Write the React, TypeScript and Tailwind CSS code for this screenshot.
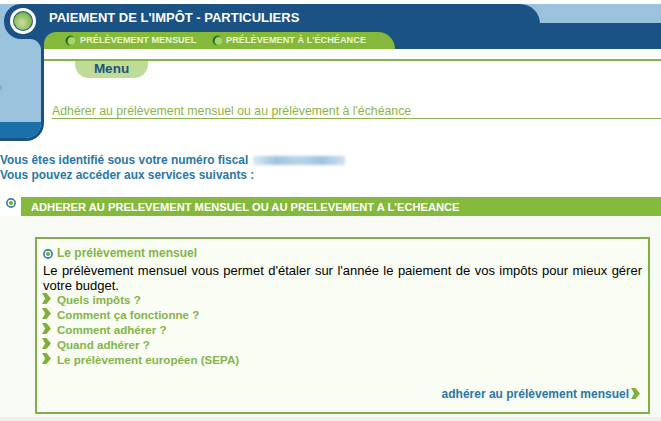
const LINKS = ["Quels impôts ?", "Comment ça fonctionne ?", "Comment adhérer ?", "Quand adhérer ?", "Le prélèvement européen (SEPA)"];

function Chevron({ className }: { className: string }) {
  return (
    <svg viewBox="0 0 9 11" className={className}>
      <path d="M0 0 L4.5 0 L9 5.5 L4.5 11 L0 11 L3.2 5.5 Z" fill="#7fb03c" />
    </svg>
  );
}

function Target() {
  return (
    <svg viewBox="0 0 10 10" className="w-[10px] h-[10px] shrink-0">
      <circle cx="5" cy="5" r="4.1" fill="#ffffff" stroke="#2f7fa5" strokeWidth="1.6" />
      <circle cx="5" cy="5" r="2" fill="#74a83c" />
    </svg>
  );
}

function TabDot() {
  return (
    <svg viewBox="0 0 11 11" className="w-[11px] h-[11px] shrink-0">
      <path d="M9 1.8 A5 5 0 1 0 5.5 10.5 A4 4 0 0 1 9 1.8 Z" fill="#1f6a22" />
      <circle cx="6.6" cy="6" r="3.6" fill="#a9d46a" />
    </svg>
  );
}

export default function App() {
  return (
    <div className="w-[661px] h-[421px] overflow-hidden bg-white font-['Liberation_Sans',Arial,sans-serif]">
      <div className="pt-[4px] flex h-[141px]">
        <div className="w-[44px] flex flex-col shrink-0">
          <div className="h-[35px] bg-[#9bc2dd] pl-[4px] shrink-0">
            <div className="h-[35px] bg-[#1b5285] rounded-l-[17px] flex items-center pl-[6px] pb-[1px]">
              <div className="w-[26px] h-[26px] rounded-full bg-white flex items-center justify-center">
                <div className="w-[20px] h-[20px] rounded-full bg-[#1b5285] flex items-center justify-center">
                  <div className="w-[18px] h-[18px] rounded-full bg-[radial-gradient(circle_at_45%_60%,#cfdcae,#86bd4e_60%,#3f8f2f)]" />
                </div>
              </div>
            </div>
          </div>
          <div className="flex-1 bg-[#1b5285] rounded-br-[18px] pr-[3px] pb-[3px]">
            <div className="h-full bg-[#9bc2dd] rounded-tr-[11px] rounded-br-[15px] overflow-hidden flex flex-col">
              <div className="w-[2px] h-[5px] mt-[46px] bg-[#7fb0d0]" />
              <div className="flex-1" />
              <div className="h-[16px] bg-[#1a70a8]" />
            </div>
          </div>
        </div>
        <div className="flex-1 flex flex-col">
          <div className="h-[28px] shrink-0 bg-[linear-gradient(#9bc2dd_19px,#1b5285_19px)]">
            <div className="w-[496px] h-[28px] bg-[#1b5285] rounded-tr-[20px] pl-[5px] pt-[3px] text-white font-bold text-[13px] leading-[22px]">
              PAIEMENT DE L'IMPÔT - PARTICULIERS
            </div>
          </div>
          <div className="h-[17px] shrink-0 bg-[#1b5285]">
            <div className="w-[351px] h-[17px] bg-[#84b93b] rounded-tl-[12px] rounded-tr-[17px] flex items-center pl-[21px] text-[9.2px] font-bold text-[#eaf4da]">
              <TabDot />
              <span className="ml-[4px] w-[132px] shrink-0">PRÉLÈVEMENT MENSUEL</span>
              <TabDot />
              <span className="ml-[3px]">PRÉLÈVEMENT À L'ÉCHÉANCE</span>
            </div>
          </div>
          <div className="flex-1 pt-[10px]">
            <div className="h-[2px] bg-[#86b34a]" />
            <div className="ml-[31px] w-[73px] h-[17px] bg-[#bfdb98] rounded-b-[14px] text-center text-[13.5px] leading-[16px] font-bold text-[#23527c]">
              Menu
            </div>
            <div className="ml-[8px] mt-[24px] h-[17px] border-b border-[#8ab54a] text-[12.3px] leading-[18px] text-[#8ab54a]">
              Adhérer au prélèvement mensuel ou au prélèvement à l'échéance
            </div>
          </div>
        </div>
      </div>

      <div className="mt-[12px] text-[11.9px] leading-[15px] font-bold text-[#2a77a8]">
        <div className="flex items-center">
          Vous êtes identifié sous votre numéro fiscal
          <span className="ml-[5px] w-[92px] h-[9px] blur-[1.5px] bg-[linear-gradient(90deg,#dbe9f3,#9dc3e0,#b9d4e8,#9dc3e0,#cfe0ee)]" />
        </div>
        <div>Vous pouvez accéder aux services suivants :</div>
      </div>

      <div className="mt-[14px] h-[220px] bg-[#f8fbf4] flex flex-col">
        <div className="flex items-center h-[19px] shrink-0 bg-white">
          <div className="w-[21px] pl-[6px] pb-[7px]"><Target /></div>
          <div className="flex-1 h-[19px] bg-[#84b93b] pl-[10px] text-white font-bold text-[11.15px] leading-[20px]">
            ADHERER AU PRELEVEMENT MENSUEL OU AU PRELEVEMENT A L'ECHEANCE
          </div>
        </div>
        <div className="ml-[35px] mt-[21px] w-[615px] h-[177px] border-2 border-[#7fae4a] bg-[#f9fdf4] pl-[6px] pr-[6px] pt-[7px]">
          <div className="flex items-center gap-[4px] text-[12px] leading-[15px] font-bold text-[#84b44a]">
            <Target /> Le prélèvement mensuel
          </div>
          <p className="text-[13px] leading-[15px] text-black text-justify mt-[2px] mb-[-1px]">
            Le prélèvement mensuel vous permet d'étaler sur l'année le paiement de vos impôts pour mieux gérer votre budget.
          </p>
          {LINKS.map((l) => (
            <div key={l} className="flex items-center h-[15px] text-[11.6px] font-bold text-[#84b44a]">
              <Chevron className="w-[9px] h-[11px] shrink-0 mr-[6px] -mt-[2px] -ml-[1px]" />
              {l}
            </div>
          ))}
          <div className="mt-[20px] mr-[2px] flex items-center justify-end text-[12px] leading-[15px] font-bold text-[#2a77a8]">
            adhérer au prélèvement mensuel
            <Chevron className="w-[9px] h-[11px] ml-[2px] -mt-[2px]" />
          </div>
        </div>
      </div>
      <div className="h-[4px] bg-[#eeeeea]" />
    </div>
  );
}
